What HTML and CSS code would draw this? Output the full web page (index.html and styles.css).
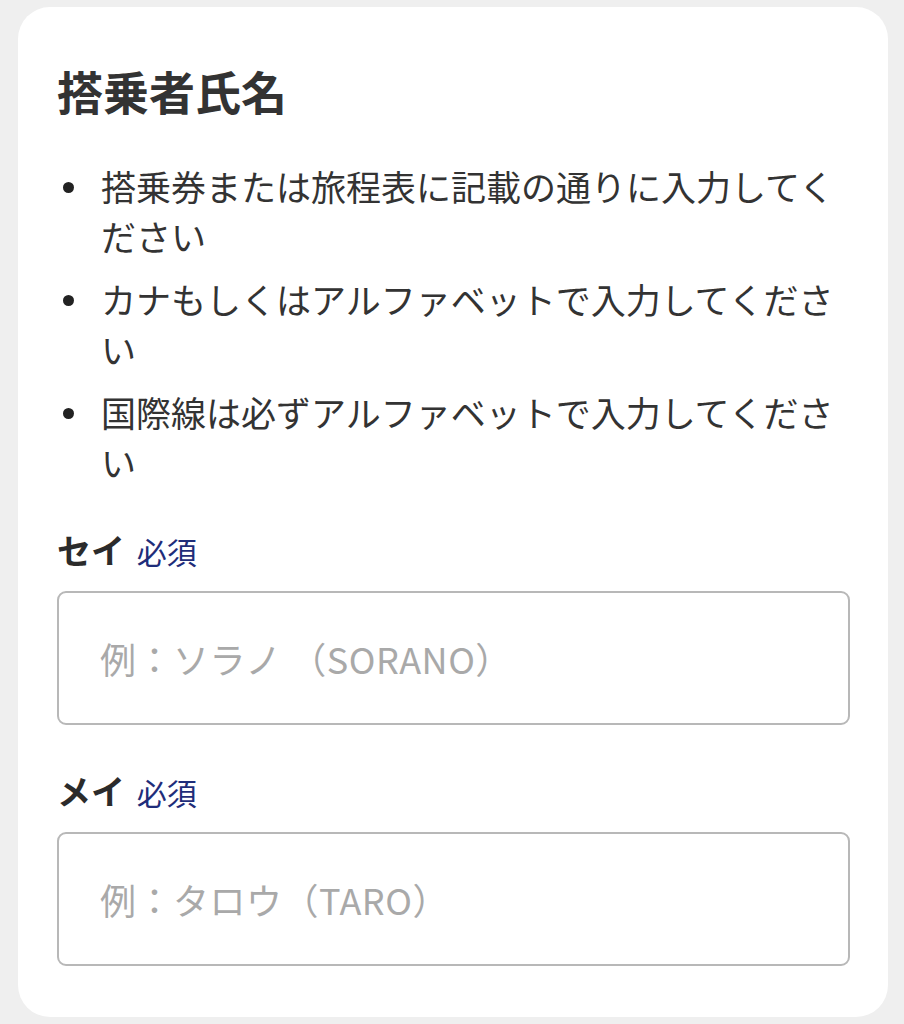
FILE: index.html
```html
<!DOCTYPE html>
<html lang="ja">
<head>
<meta charset="utf-8">
<title>搭乗者氏名</title>
<link rel="stylesheet" href="styles.css">
</head>
<body>
<section class="card">
  <h2 class="title">搭乗者氏名</h2>
  <ul class="notes">
    <li>搭乗券または旅程表に記載の通りに入力してください</li>
    <li>カナもしくはアルファベットで入力してください</li>
    <li>国際線は必ずアルファベットで入力してください</li>
  </ul>
  <div class="field">
    <label class="label" for="sei">セイ <span class="req">必須</span></label>
    <input class="input" id="sei" type="text" placeholder="例：ソラノ （SORANO）">
  </div>
  <div class="field">
    <label class="label" for="mei">メイ <span class="req">必須</span></label>
    <input class="input" id="mei" type="text" placeholder="例：タロウ（TARO）">
  </div>
</section>
</body>
</html>
```
FILE: styles.css
```css
* { box-sizing: border-box; }
html, body { margin: 0; padding: 0; }
body {
  background: #efefef;
  font-family: "Noto Sans CJK JP", "Noto Sans", sans-serif;
  color: #333;
  width: 904px;
  height: 1024px;
  overflow: hidden;
}
.card {
  margin: 7px 16px 0 18px;
  width: 870px;
  background: #fff;
  border-radius: 32px;
  padding: 53px 38px 51px 39px;
}
.title {
  margin: 0;
  font-size: 46px;
  line-height: 60px;
  font-weight: 700;
  color: #333;
}
.notes {
  list-style: none;
  margin: 41px 0 0 0;
  padding: 0 0 0 44px;
  display: flex;
  flex-direction: column;
  gap: 13px;
}
.notes li {
  position: relative;
  font-size: 35px;
  line-height: 50px;
  color: #333;
}
.notes li::before {
  content: "";
  position: absolute;
  left: -38px;
  top: 21px;
  width: 11px;
  height: 11px;
  border-radius: 50%;
  background: #222;
}
.field {
  display: flex;
  flex-direction: column;
  gap: 18px;
  margin-top: 41px;
}
.field + .field { margin-top: 44px; }
.label {
  font-size: 34px;
  line-height: 44px;
  font-weight: 700;
  color: #2b2b2b;
}
.req {
  font-size: 30px;
  font-weight: 400;
  color: #1f2d7a;
  margin-left: 4px;
}
.input {
  display: block;
  width: 100%;
  height: 134px;
  border: 2px solid #b8b8b8;
  border-radius: 9px;
  padding: 0 20px 0 41px;
  font-family: inherit;
  font-size: 36px;
  letter-spacing: 0.5px;
  color: #333;
  background: #fff;
  outline: none;
}
.input::placeholder { color: #a9a9a9; }
```
